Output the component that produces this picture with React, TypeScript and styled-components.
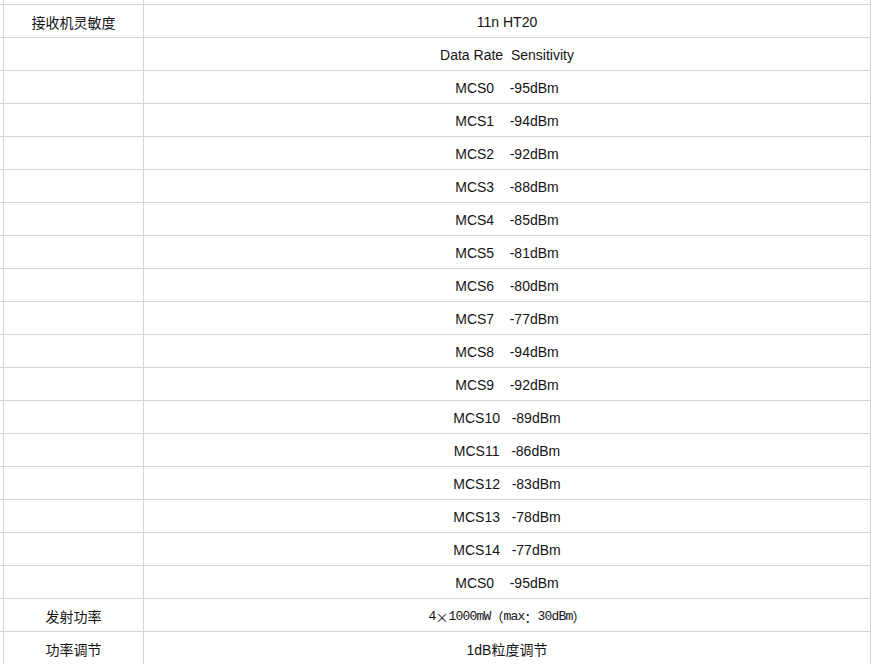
import React from "react";
import styled, { createGlobalStyle } from "styled-components";

const Global = createGlobalStyle`
  html, body { margin: 0; padding: 0; background: #ffffff; }
  body { overflow: hidden; }
`;

const LINE = "#d4d4d4";

const Sheet = styled.div`
  display: grid;
  grid-template-columns: 4px 140px 727px;
  grid-template-rows: 5px repeat(20, 33px);
  width: 871px;
  background: #ffffff;
`;

const Cell = styled.div<{ $mono?: boolean; $cjk?: boolean }>`
  box-sizing: border-box;
  border-right: 1px solid ${LINE};
  border-bottom: 1px solid ${LINE};
  display: flex;
  align-items: center;
  justify-content: center;
  padding-top: 2px;
  color: #141414;
  white-space: pre;
  font-size: ${(p) => (p.$mono ? "13px" : "14px")};
  letter-spacing: ${(p) => (p.$mono ? "-0.8px" : "0")};
  font-family: ${(p) =>
    p.$mono
      ? `"Liberation Mono", "Noto Sans CJK SC", monospace`
      : p.$cjk
      ? `"Noto Sans CJK SC", sans-serif`
      : `"Liberation Sans", "Noto Sans CJK SC", sans-serif`};
  overflow: hidden;
`;

const Wide = styled.span`
  font-family: "Noto Sans CJK SC", sans-serif;
  font-size: 13px;
  letter-spacing: 0;
`;

const mcs: [string, string][] = [
  ["MCS0", "-95dBm"],
  ["MCS1", "-94dBm"],
  ["MCS2", "-92dBm"],
  ["MCS3", "-88dBm"],
  ["MCS4", "-85dBm"],
  ["MCS5", "-81dBm"],
  ["MCS6", "-80dBm"],
  ["MCS7", "-77dBm"],
  ["MCS8", "-94dBm"],
  ["MCS9", "-92dBm"],
  ["MCS10", "-89dBm"],
  ["MCS11", "-86dBm"],
  ["MCS12", "-83dBm"],
  ["MCS13", "-78dBm"],
  ["MCS14", "-77dBm"],
  ["MCS0", "-95dBm"],
];

type Row = { label?: string; value: React.ReactNode; mono?: boolean };

const rows: Row[] = [
  { label: "接收机灵敏度", value: "11n HT20" },
  { value: "Data Rate  Sensitivity" },
  ...mcs.map(([a, b]) => ({
    value: `${a}${a.length > 4 ? "   " : "    "}${b}`,
  })),
  {
    label: "发射功率",
    mono: true,
    value: (
      <>
        4<Wide>×</Wide>1000mW<Wide>（</Wide>max<Wide>：</Wide>30dBm<Wide>）</Wide>
      </>
    ),
  },
  { label: "功率调节", value: "1dB粒度调节" },
];

export default function App() {
  return (
    <>
      <Global />
      <Sheet>
        <Cell />
        <Cell />
        <Cell />
        {rows.map((r, i) => (
          <React.Fragment key={i}>
            <Cell />
            <Cell $cjk>{r.label ?? ""}</Cell>
            <Cell $mono={r.mono}>{r.value}</Cell>
          </React.Fragment>
        ))}
      </Sheet>
    </>
  );
}
